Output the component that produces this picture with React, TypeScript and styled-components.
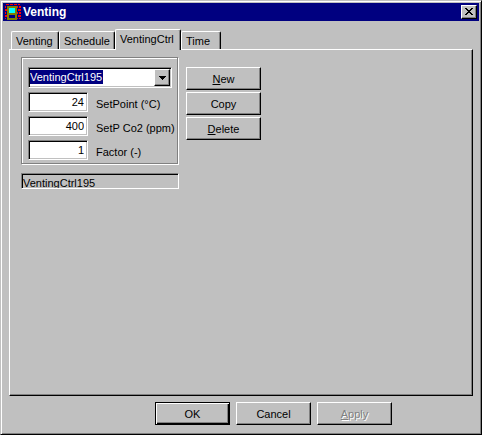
import React, { useState } from "react";
import styled, { createGlobalStyle, css } from "styled-components";

const face = "#c0c0c0";
const shade = "#808080";
const navy = "#000080";

const GlobalStyle = createGlobalStyle`
  * { box-sizing: border-box; }
  body { margin: 0; background: ${face}; }
  body, button, input { font-family: "Liberation Sans", Arial, sans-serif; font-size: 11px; color: #000; }
`;

const raised = css`
  border: 1px solid;
  border-color: #fff #000 #000 #fff;
  box-shadow: inset -1px -1px ${shade};
`;

const sunken = css`
  border: 1px solid;
  border-color: ${shade} #fff #fff ${shade};
  box-shadow: inset 1px 1px #000, inset -1px -1px ${face};
`;

const Window = styled.main`
  display: flex;
  flex-direction: column;
  min-height: 100vh;
  padding: 2px;
  background: ${face};
  border: 1px solid;
  border-color: ${face} #000 #000 ${face};
  box-shadow: inset 1px 1px #fff, inset -1px -1px ${shade};
`;

const TitleBar = styled.header`
  display: flex;
  align-items: center;
  height: 18px;
  padding: 0 2px;
  gap: 2px;
  background: ${navy};
`;

const Title = styled.h1`
  flex: 1;
  margin: 0;
  font-size: 12px;
  line-height: 18px;
  color: #fff;
`;

const CloseButton = styled.button`
  ${raised}
  display: grid;
  place-items: center;
  width: 16px;
  height: 14px;
  padding: 0 1px 1px 0;
  background: ${face};
`;

const TabList = styled.div`
  display: flex;
  align-items: flex-end;
  height: 20px;
  margin-top: 8px;
  padding-left: 8px;
`;

const Tab = styled.button<{ $selected: boolean; $width: number }>`
  z-index: ${(p) => (p.$selected ? 1 : 0)};
  width: ${(p) => p.$width}px;
  height: ${(p) => (p.$selected ? 21 : 18)}px;
  margin: ${(p) => (p.$selected ? "0 0 -1px" : "0")};
  padding: 0 0 ${(p) => (p.$selected ? 3 : 0)}px 4px;
  background: ${face};
  border: 1px solid;
  border-color: #fff #000 ${face} #fff;
  border-bottom-width: 0;
  border-radius: 2px 2px 0 0;
  box-shadow: inset -1px 0 ${shade};
  text-align: left;
  white-space: nowrap;
`;

const Panel = styled.section`
  flex: 1;
  display: flex;
  align-items: flex-start;
  gap: 7px;
  margin: 0 6px;
  padding: 7px 11px;
  ${raised}
`;

const Settings = styled.div`
  display: flex;
  flex-direction: column;
  gap: 9px;
  width: 158px;
`;

const Group = styled.div`
  display: flex;
  flex-direction: column;
  gap: 4px;
  padding: 9px 5px 3px;
  border: 1px solid ${shade};
  box-shadow: 1px 1px #fff, inset 1px 1px #fff;
  margin-right: 1px;
`;

const Combo = styled.div`
  ${sunken}
  display: flex;
  height: 21px;
  padding: 1px;
  margin: 0 0 0 1px;
  background: #fff;
`;

const ComboInput = styled.input`
  flex: 1;
  min-width: 0;
  padding: 0 0 1px;
  border: 0;
  outline: 0;
  background: linear-gradient(${navy}, ${navy}) no-repeat 0 1px / 73px 14px;
  color: #fff;
`;

const DropButton = styled.button`
  ${raised}
  display: grid;
  place-items: center;
  width: 16px;
  padding: 0;
  background: ${face};
`;

const Field = styled.div`
  display: flex;
  gap: 8px;
  padding-left: 1px;
  height: 20px;
`;

const NumberInput = styled.input`
  ${sunken}
  width: 60px;
  padding: 0 3px 0 2px;
  background: #fff;
  text-align: right;
  outline: 0;
`;

const FieldLabel = styled.label`
  padding-top: 5px;
  line-height: 14px;
  white-space: nowrap;
`;

const Status = styled.output`
  ${sunken}
  display: block;
  height: 16px;
  padding: 2px 1px 0;
  line-height: 14px;
  overflow: hidden;
`;

const Actions = styled.div`
  display: flex;
  flex-direction: column;
  gap: 2px;
  padding-top: 10px;
`;

const Button = styled.button<{ $primary?: boolean }>`
  ${raised}
  width: 75px;
  height: 23px;
  padding: 0;
  background: ${face};
  ${(p) => p.$primary && css`
    border-color: #000;
    box-shadow: inset 1px 1px #fff, inset -1px -1px #000, inset -2px -2px ${shade};
  `}
  &:disabled { color: ${shade}; text-shadow: 1px 1px #fff; }
`;

const Footer = styled.footer`
  display: flex;
  justify-content: flex-end;
  gap: 6px;
  padding: 6px 87px 7px 6px;
`;

const AppIcon = () => (
  <svg width="16" height="16" viewBox="0 0 16 16" shapeRendering="crispEdges" aria-hidden="true">
    <path fill="#f00" d="M1 0h3v1H1zM5 0h3v1H5zM9 0h3v1H9zM13 0h2v1h-2zM0 2h1v2H0zM12 2h1v2h-1zM14 2h2v2h-2zM0 5h2v2H0zM13 5h3v2h-3zM0 8h1v2H0zM12 8h1v2h-1zM14 8h2v2h-2zM0 11h2v2H0zM13 11h3v2h-3zM0 14h1v1H0zM12 14h1v1h-1zM14 14h2v1h-2z" />
    <path fill="#808000" d="M2 2h10v14H2z" />
    <path fill="#0ff" d="M4 4h6v5H4z" />
    <path fill="#000080" d="M4 11h6v3H4z" />
  </svg>
);

const tabs = [
  { name: "Venting", width: 48 },
  { name: "Schedule", width: 56 },
  { name: "VentingCtrl", width: 66 },
  { name: "Time", width: 40 },
];

const fields = [
  { id: "setpoint", label: "SetPoint (°C)", value: "24" },
  { id: "co2", label: "SetP Co2 (ppm)", value: "400" },
  { id: "factor", label: "Factor (-)", value: "1" },
];

export default function App() {
  const [tab, setTab] = useState("VentingCtrl");
  const [name, setName] = useState("VentingCtrl195");
  return (
    <Window>
      <GlobalStyle />
      <TitleBar>
        <AppIcon />
        <Title>Venting</Title>
        <CloseButton aria-label="Close">
          <svg width="8" height="7" viewBox="0 0 8 7" shapeRendering="crispEdges">
            <path d="M0 0h2v1H0zM6 0h2v1H6zM1 1h2v1H1zM5 1h2v1H5zM2 2h4v1H2zM3 3h2v1H3zM2 4h4v1H2zM1 5h2v1H1zM5 5h2v1H5zM0 6h2v1H0zM6 6h2v1H6z" />
          </svg>
        </CloseButton>
      </TitleBar>
      <TabList role="tablist">
        {tabs.map((t) => (
          <Tab key={t.name} role="tab" aria-selected={t.name === tab} $selected={t.name === tab} $width={t.width} onClick={() => setTab(t.name)}>
            {t.name}
          </Tab>
        ))}
      </TabList>
      <Panel role="tabpanel" aria-label={tab}>
        <Settings>
          <Group>
            <Combo>
              <ComboInput aria-label="Controller" value={name} onChange={(e) => setName(e.target.value)} />
              <DropButton aria-label="Show controllers">
                <svg width="7" height="4" viewBox="0 0 7 4" shapeRendering="crispEdges">
                  <path d="M0 0h7v1H0zM1 1h5v1H1zM2 2h3v1H2zM3 3h1v1H3z" />
                </svg>
              </DropButton>
            </Combo>
            {fields.map((f) => (
              <Field key={f.id}>
                <NumberInput id={f.id} defaultValue={f.value} />
                <FieldLabel htmlFor={f.id}>{f.label}</FieldLabel>
              </Field>
            ))}
          </Group>
          <Status>{name}</Status>
        </Settings>
        <Actions>
          <Button><u>N</u>ew</Button>
          <Button>Copy</Button>
          <Button><u>D</u>elete</Button>
        </Actions>
      </Panel>
      <Footer>
        <Button $primary>OK</Button>
        <Button>Cancel</Button>
        <Button disabled><u>A</u>pply</Button>
      </Footer>
    </Window>
  );
}
